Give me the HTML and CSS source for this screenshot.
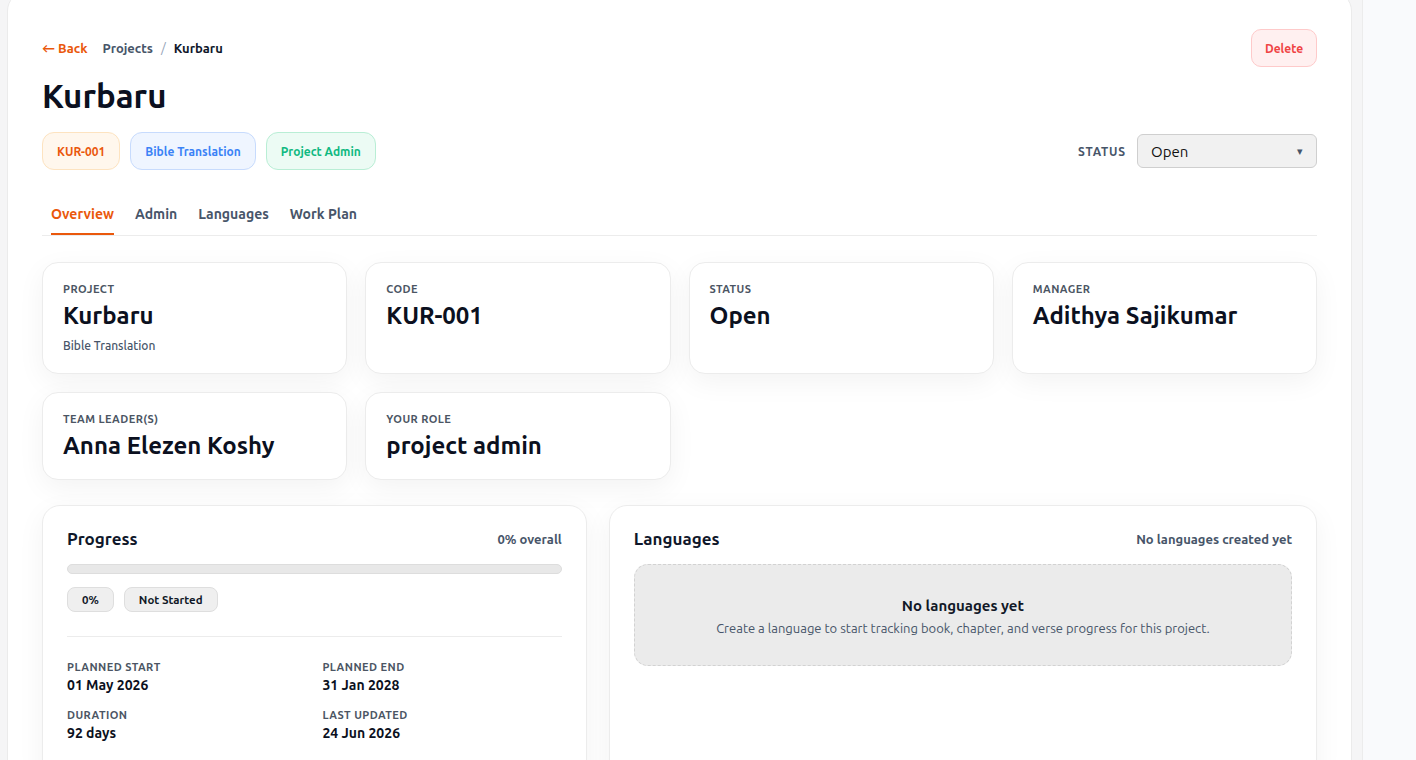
FILE: index.html
```html
<!DOCTYPE html>
<html lang="en">

<head>
    <meta charset="utf-8">
    <meta name="viewport" content="width=device-width, initial-scale=1.0">
    <title>Kurbaru - Project</title>
    <link rel="stylesheet" href="styles.css">
</head>

<body>
    <div class="layout">
        <main class="panel">

            <div class="topbar">
                <div class="crumbs">
                    <a class="back" href="#">&larr; Back</a>
                    <a class="crumb" href="#">Projects</a>
                    <span class="sep">/</span>
                    <span class="current">Kurbaru</span>
                </div>
                <button class="btn-delete">Delete</button>
            </div>

            <h1 class="title">Kurbaru</h1>

            <div class="meta-row">
                <div class="badges">
                    <span class="badge orange">KUR-001</span>
                    <span class="badge blue">Bible Translation</span>
                    <span class="badge green">Project Admin</span>
                </div>
                <div class="status-pick">
                    <span class="status-label">Status</span>
                    <div class="select">
                        <span>Open</span>
                        <span class="caret">&#9662;</span>
                    </div>
                </div>
            </div>

            <nav class="tabs">
                <a class="tab active" href="#">Overview</a>
                <a class="tab" href="#">Admin</a>
                <a class="tab" href="#">Languages</a>
                <a class="tab" href="#">Work Plan</a>
            </nav>

            <section class="info-grid">
                <div class="info-card">
                    <p class="label">Project</p>
                    <p class="value">Kurbaru</p>
                    <p class="sub">Bible Translation</p>
                </div>
                <div class="info-card">
                    <p class="label">Code</p>
                    <p class="value">KUR-001</p>
                </div>
                <div class="info-card">
                    <p class="label">Status</p>
                    <p class="value">Open</p>
                </div>
                <div class="info-card">
                    <p class="label">Manager</p>
                    <p class="value">Adithya Sajikumar</p>
                </div>
                <div class="info-card">
                    <p class="label">Team Leader(s)</p>
                    <p class="value">Anna Elezen Koshy</p>
                </div>
                <div class="info-card">
                    <p class="label">Your Role</p>
                    <p class="value">project admin</p>
                </div>
            </section>

            <section class="bottom-grid">
                <div class="box">
                    <div class="box-head">
                        <h2>Progress</h2>
                        <span class="note">0% overall</span>
                    </div>
                    <div class="bar"><div class="bar-fill" style="width: 0%"></div></div>
                    <div class="pills">
                        <span class="pill">0%</span>
                        <span class="pill">Not Started</span>
                    </div>
                    <hr class="divider">
                    <div class="dates">
                        <div>
                            <p class="label">Planned Start</p>
                            <p class="date">01 May 2026</p>
                        </div>
                        <div>
                            <p class="label">Planned End</p>
                            <p class="date">31 Jan 2028</p>
                        </div>
                        <div>
                            <p class="label">Duration</p>
                            <p class="date">92 days</p>
                        </div>
                        <div>
                            <p class="label">Last Updated</p>
                            <p class="date">24 Jun 2026</p>
                        </div>
                    </div>
                </div>

                <div class="box">
                    <div class="box-head">
                        <h2>Languages</h2>
                        <span class="note">No languages created yet</span>
                    </div>
                    <div class="empty">
                        <p class="empty-title">No languages yet</p>
                        <p class="empty-text">Create a language to start tracking book, chapter, and verse progress for this project.</p>
                    </div>
                </div>
            </section>

        </main>
        <aside class="side"></aside>
    </div>
</body>

</html>
```

FILE: styles.css
```css
body {
    margin: 0;
    height: 760px;
    background-color: #f5f5f6;
    font-family: "Ubuntu", "Lato", "Noto Sans", sans-serif;
    color: #0f172a;
    overflow: hidden;
}

p {
    margin: 0;
}

a {
    text-decoration: none;
}

.layout {
    display: flex;
}

.panel {
    width: 1275px;
    margin: -9px 0 0 7px;
    padding: 37px 34px 120px 34px;
    background-color: #fff;
    border: 1px solid #ebebeb;
    border-radius: 20px;
    flex-shrink: 0;
}

.side {
    margin-left: 10px;
    flex: 1;
    background-color: #f9fafc;
    border-left: 1px solid #ececec;
}

/* header */

.topbar {
    display: flex;
    justify-content: space-between;
    align-items: center;
    height: 38px;
}

.crumbs {
    display: flex;
    align-items: center;
    font-size: 13px;
    font-weight: 700;
}

.back {
    color: #ea580c;
    margin-right: 15px;
}

.crumb {
    color: #475569;
}

.sep {
    color: #94a3b8;
    font-weight: 400;
    margin: 0 8px;
}

.current {
    color: #0f172a;
}

.btn-delete {
    height: 38px;
    width: 66px;
    background-color: #fff0f0;
    border: 1px solid #fecaca;
    border-radius: 10px;
    color: #ef4444;
    font-family: inherit;
    font-size: 12px;
    font-weight: 700;
}

.title {
    margin: 10px 0 0 0;
    font-size: 33px;
    line-height: 38px;
    font-weight: 700;
    color: #0b1020;
}

.meta-row {
    display: flex;
    justify-content: space-between;
    align-items: center;
    margin-top: 17px;
}

.badges {
    display: flex;
    gap: 10px;
}

.badge {
    display: flex;
    align-items: center;
    height: 36px;
    padding: 0 14px;
    border-radius: 12px;
    font-size: 12px;
    font-weight: 700;
    border: 1px solid;
}

.badge.orange {
    background-color: #fff7ed;
    border-color: #fde3c0;
    color: #ea580c;
}

.badge.blue {
    background-color: #eff5ff;
    border-color: #c7dbfd;
    color: #3b82f6;
}

.badge.green {
    background-color: #ecfbf4;
    border-color: #b9eed5;
    color: #10b981;
}

.status-pick {
    display: flex;
    align-items: center;
    gap: 11px;
}

.status-label {
    font-size: 12px;
    font-weight: 700;
    text-transform: uppercase;
    letter-spacing: 0.07em;
    color: #475569;
}

.select {
    display: flex;
    justify-content: space-between;
    align-items: center;
    width: 152px;
    height: 32px;
    padding: 0 13px;
    background-color: #f1f1f1;
    border: 1px solid #cfcfcf;
    border-radius: 6px;
    font-size: 15px;
    color: #111;
}

.caret {
    font-size: 11px;
    color: #475569;
}

/* tabs */

.tabs {
    display: flex;
    gap: 21px;
    margin-top: 26px;
    padding: 0 9px;
    border-bottom: 1px solid #ececec;
}

.tab {
    padding: 8px 0 9px 0;
    font-size: 14px;
    line-height: 20px;
    font-weight: 700;
    color: #475569;
    border-bottom: 2px solid transparent;
}

.tab.active {
    color: #ea580c;
    border-bottom-color: #ea580c;
}

/* info cards */

.info-grid {
    display: grid;
    grid-template-columns: repeat(4, 1fr);
    gap: 18px;
    margin-top: 26px;
}

.info-card {
    padding: 19px 20px;
    background-color: #fff;
    border: 1px solid #ececec;
    border-radius: 16px;
    box-shadow: 0 8px 28px rgba(0, 0, 0, 0.05);
}

.label {
    font-size: 11px;
    line-height: 14px;
    font-weight: 700;
    text-transform: uppercase;
    letter-spacing: 0.04em;
    color: #4b5563;
}

.value {
    margin-top: 6px;
    font-size: 24px;
    line-height: 28px;
    font-weight: 700;
    color: #0b1020;
}

.sub {
    margin-top: 8px;
    font-size: 12px;
    line-height: 16px;
    font-weight: 500;
    color: #475569;
}

/* bottom cards */

.bottom-grid {
    display: grid;
    grid-template-columns: 1fr 1.3fr;
    gap: 22px;
    margin-top: 25px;
}

.box {
    padding: 23px 24px 40px 24px;
    background-color: #fff;
    border: 1px solid #ececec;
    border-radius: 18px;
    box-shadow: 0 8px 28px rgba(0, 0, 0, 0.05);
}

.box-head {
    display: flex;
    justify-content: space-between;
    align-items: center;
}

.box-head h2 {
    margin: 0;
    font-size: 17px;
    line-height: 20px;
    font-weight: 700;
}

.note {
    font-size: 13px;
    font-weight: 700;
    color: #475569;
}

.bar {
    margin-top: 15px;
    height: 8px;
    background-color: #e8e8e8;
    border: 1px solid #dddddd;
    border-radius: 999px;
}

.bar-fill {
    height: 100%;
    background-color: #ea580c;
    border-radius: 999px;
}

.pills {
    display: flex;
    gap: 10px;
    margin-top: 13px;
}

.pill {
    display: flex;
    align-items: center;
    height: 23px;
    padding: 0 14px;
    background-color: #efefef;
    border: 1px solid #dedede;
    border-radius: 8px;
    font-size: 11.5px;
    font-weight: 700;
    color: #111827;
}

.divider {
    margin: 24px 0 0 0;
    border: 0;
    border-top: 1px solid #ececec;
}

.dates {
    display: grid;
    grid-template-columns: 1fr 1fr;
    column-gap: 16px;
    row-gap: 14px;
    margin-top: 23px;
}

.date {
    margin-top: 2px;
    font-size: 14px;
    line-height: 18px;
    font-weight: 700;
    color: #0b1020;
}

.empty {
    margin-top: 15px;
    padding: 32px 20px 29px 20px;
    background-color: #ebebeb;
    border: 1px dashed #d2d2d2;
    border-radius: 14px;
    text-align: center;
}

.empty-title {
    font-size: 15px;
    line-height: 18px;
    font-weight: 700;
    color: #111827;
}

.empty-text {
    margin-top: 5px;
    font-size: 13px;
    line-height: 16px;
    color: #475569;
}
```
